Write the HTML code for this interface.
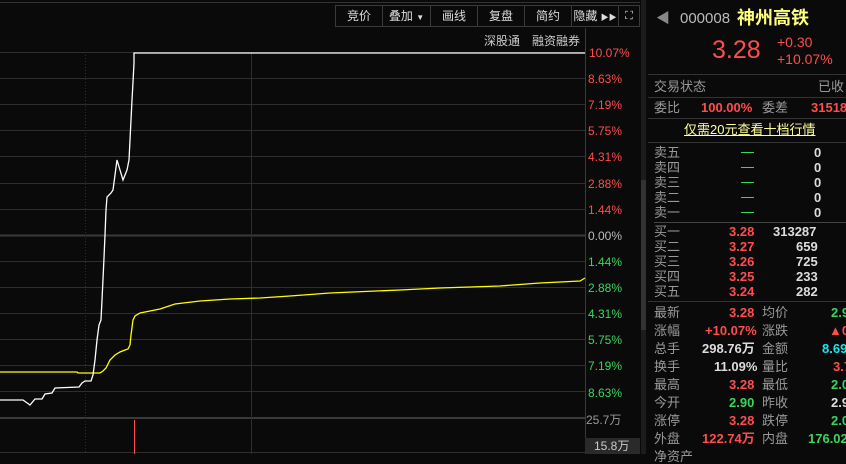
<!DOCTYPE html>
<html><head><meta charset="utf-8"><style>
*{margin:0;padding:0;box-sizing:border-box}
body{width:846px;height:454px;background:#0a0a0a;overflow:hidden;position:relative;font-family:"Liberation Sans","Noto Sans CJK SC",sans-serif;font-size:12px;color:#bbb}
.a{position:absolute;white-space:nowrap;line-height:14px}
.r{color:#ff4c4c}.g{color:#3ad65a}.w{color:#ddd}.c{color:#18e5f0}
.btn{position:absolute;top:5px;height:22px;border:1px solid #3a3a3a;color:#ddd;text-align:center;line-height:20px;font-size:12px}
.lbl{color:#999}
.rp .a{font-size:13px;line-height:15px}
.rp .r,.rp .g,.rp .w,.rp .c{font-weight:bold}
</style></head><body>
<div style="position:absolute;left:0;top:2px;width:640px;height:1px;background:#333"></div>
<div class="btn" style="left:335px;width:48px">竞价</div>
<div class="btn" style="left:382px;width:49px">叠加 <span style="font-size:8px">▼</span></div>
<div class="btn" style="left:430px;width:48px">画线</div>
<div class="btn" style="left:477px;width:48px">复盘</div>
<div class="btn" style="left:524px;width:48px">简约</div>
<div class="btn" style="left:571px;width:48px">隐藏 <span style="font-size:8px">▶▶</span></div>
<div class="btn" style="left:618px;width:22px;font-size:11px">⛶</div>
<div class="a w" style="left:484px;top:34px;color:#ccc">深股通</div>
<div class="a w" style="left:532px;top:34px;color:#ccc">融资融券</div>
<svg style="position:absolute;left:0;top:0" width="646" height="454">
<g stroke="#2e2e2e" stroke-width="1">
<line x1="0" y1="52.5" x2="585" y2="52.5"/><line x1="0" y1="78.5" x2="585" y2="78.5"/><line x1="0" y1="104.5" x2="585" y2="104.5"/><line x1="0" y1="130.5" x2="585" y2="130.5"/><line x1="0" y1="156.5" x2="585" y2="156.5"/><line x1="0" y1="183.5" x2="585" y2="183.5"/><line x1="0" y1="209.5" x2="585" y2="209.5"/>
<line x1="0" y1="235.5" x2="585" y2="235.5" stroke="#3a3a3a" stroke-width="2"/>
<line x1="0" y1="261.5" x2="585" y2="261.5"/><line x1="0" y1="287.5" x2="585" y2="287.5"/><line x1="0" y1="313.5" x2="585" y2="313.5"/><line x1="0" y1="339.5" x2="585" y2="339.5"/><line x1="0" y1="365.5" x2="585" y2="365.5"/><line x1="0" y1="391.5" x2="585" y2="391.5"/>
<line x1="0" y1="418" x2="585" y2="418" stroke="#3a3a3a" stroke-width="2"/>
<line x1="0" y1="452.5" x2="585" y2="452.5"/>
<line x1="251.5" y1="52" x2="251.5" y2="454"/>
<line x1="585.5" y1="28" x2="585.5" y2="454" stroke="#3a3a3a"/>
<line x1="85.5" y1="52" x2="85.5" y2="454" stroke-dasharray="1,2"/>
</g>
<line x1="134.5" y1="420" x2="134.5" y2="454" stroke="#ff4c4c"/>
<polyline fill="none" stroke="#ffff00" stroke-width="1.3" points="0,372 77,372 78,373 100,373 103,371 106,368 110,360 115,355 120,352 125,350 128,349 130,345 131,335 133,320 135,316 140,313 150,311 160,309 175,304 200,301 230,299 260,298 290,296 330,293 400,290 440,288 500,286 540,283 580,281 585,278"/>
<polyline fill="none" stroke="#fff" stroke-width="1.3" points="0,400 23,400 30,405 35,399 42,399 45,394 52,393 55,388 79,387 82,383 85,381 91,381 93,375 95,360 97,340 99,325 101,320 102,300 104,258 105,235 106,210 107,197 111,193 113,190 115,175 117,160 120,170 123,180 127,170 129,160 130,140 131,120 132,100 133,82 134,63 134,53 585,53"/>
<rect x="641" y="0" width="6" height="454" fill="#1c1c1c"/>
<rect x="641" y="180" width="6" height="150" fill="#333"/>
</svg>
<div class="a r" style="left:589px;top:46px">10.07%</div>
<div class="a r" style="left:588px;top:72px">8.63%</div>
<div class="a r" style="left:588px;top:98px">7.19%</div>
<div class="a r" style="left:588px;top:124px">5.75%</div>
<div class="a r" style="left:588px;top:150px">4.31%</div>
<div class="a r" style="left:588px;top:177px">2.88%</div>
<div class="a r" style="left:588px;top:203px">1.44%</div>
<div class="a" style="left:588px;top:229px;color:#bbb">0.00%</div>
<div class="a g" style="left:588px;top:255px">1.44%</div>
<div class="a g" style="left:588px;top:281px">2.88%</div>
<div class="a g" style="left:588px;top:307px">4.31%</div>
<div class="a g" style="left:588px;top:333px">5.75%</div>
<div class="a g" style="left:588px;top:359px">7.19%</div>
<div class="a g" style="left:588px;top:386px">8.63%</div>
<div class="a" style="left:586px;top:413px;color:#999">25.7万</div>
<div style="position:absolute;left:585px;top:438px;width:55px;height:16px;background:#2a2a2a"></div>
<div class="a" style="left:594px;top:439px;color:#ccc">15.8万</div>

<div class="rp" style="position:absolute;left:648px;top:0;width:198px;height:454px">
<div class="a" style="left:8px;top:11px;color:#888;font-size:14px">◀</div>
<div class="a" style="left:32px;top:11px;color:#bbb;font-size:15px;font-weight:normal">000008</div>
<div class="a" style="left:89px;top:7px;color:#ffff80;font-size:18px;font-weight:bold;line-height:22px">神州高铁</div>
<div class="a r" style="left:64px;top:37px;font-size:25px;line-height:27px;font-weight:normal">3.28</div>
<div class="a r" style="left:129px;top:35px;font-size:14px;font-weight:normal">+0.30</div>
<div class="a r" style="left:129px;top:52px;font-size:14px;font-weight:normal">+10.07%</div>
<div style="position:absolute;left:0;top:74px;width:198px;height:1px;background:#333"></div>
<div class="a lbl" style="left:6px;top:79px">交易状态</div>
<div class="a lbl" style="left:170px;top:79px">已收</div>
<div style="position:absolute;left:0;top:97px;width:198px;height:1px;background:#333"></div>
<div class="a lbl" style="left:6px;top:100px">委比</div>
<div class="a r" style="left:53px;top:100px">100.00%</div>
<div class="a lbl" style="left:114px;top:100px">委差</div>
<div class="a r" style="left:163px;top:100px">31518</div>
<div style="position:absolute;left:0;top:118px;width:198px;height:1px;background:#333"></div>
<div class="a" style="left:36px;top:122px;color:#ffff99;text-decoration:underline">仅需20元查看十档行情</div>
<div style="position:absolute;left:0;top:142px;width:198px;height:1px;background:#333"></div>
<div class="a lbl" style="left:6px;top:145px">卖五</div><div style="position:absolute;left:93px;top:152px;width:13px;height:1px;background:#3ad65a"></div><div class="a w" style="left:166px;top:145px">0</div>
<div class="a lbl" style="left:6px;top:160px">卖四</div><div style="position:absolute;left:93px;top:167px;width:13px;height:1px;background:#3ad65a"></div><div class="a w" style="left:166px;top:160px">0</div>
<div class="a lbl" style="left:6px;top:175px">卖三</div><div style="position:absolute;left:93px;top:182px;width:13px;height:1px;background:#3ad65a"></div><div class="a w" style="left:166px;top:175px">0</div>
<div class="a lbl" style="left:6px;top:190px">卖二</div><div style="position:absolute;left:93px;top:197px;width:13px;height:1px;background:#3ad65a"></div><div class="a w" style="left:166px;top:190px">0</div>
<div class="a lbl" style="left:6px;top:205px">卖一</div><div style="position:absolute;left:93px;top:212px;width:13px;height:1px;background:#3ad65a"></div><div class="a w" style="left:166px;top:205px">0</div>
<div style="position:absolute;left:6px;top:222px;width:192px;height:1px;background:#444"></div>
<div class="a lbl" style="left:6px;top:224px">买一</div><div class="a r" style="left:81px;top:224px">3.28</div><div class="a w" style="left:125px;top:224px">313287</div>
<div class="a lbl" style="left:6px;top:239px">买二</div><div class="a r" style="left:81px;top:239px">3.27</div><div class="a w" style="left:148px;top:239px">659</div>
<div class="a lbl" style="left:6px;top:254px">买三</div><div class="a r" style="left:81px;top:254px">3.26</div><div class="a w" style="left:148px;top:254px">725</div>
<div class="a lbl" style="left:6px;top:269px">买四</div><div class="a r" style="left:81px;top:269px">3.25</div><div class="a w" style="left:148px;top:269px">233</div>
<div class="a lbl" style="left:6px;top:284px">买五</div><div class="a r" style="left:81px;top:284px">3.24</div><div class="a w" style="left:148px;top:284px">282</div>
<div style="position:absolute;left:0;top:301px;width:198px;height:1px;background:#333"></div>
<div class="a lbl" style="left:6px;top:305px">最新</div><div class="a r" style="left:81px;top:305px">3.28</div><div class="a lbl" style="left:114px;top:305px">均价</div><div class="a g" style="left:183px;top:305px">2.9</div>
<div class="a lbl" style="left:6px;top:323px">涨幅</div><div class="a r" style="left:57px;top:323px">+10.07%</div><div class="a lbl" style="left:114px;top:323px">涨跌</div><div class="a r" style="left:181px;top:323px">▲0.3</div>
<div class="a lbl" style="left:6px;top:341px">总手</div><div class="a w" style="left:54px;top:341px">298.76万</div><div class="a lbl" style="left:114px;top:341px">金额</div><div class="a c" style="left:174px;top:341px">8.69</div>
<div class="a lbl" style="left:6px;top:359px">换手</div><div class="a w" style="left:66px;top:359px">11.09%</div><div class="a lbl" style="left:114px;top:359px">量比</div><div class="a r" style="left:185px;top:359px">3.7</div>
<div class="a lbl" style="left:6px;top:377px">最高</div><div class="a r" style="left:81px;top:377px">3.28</div><div class="a lbl" style="left:114px;top:377px">最低</div><div class="a g" style="left:183px;top:377px">2.0</div>
<div class="a lbl" style="left:6px;top:395px">今开</div><div class="a g" style="left:81px;top:395px">2.90</div><div class="a lbl" style="left:114px;top:395px">昨收</div><div class="a w" style="left:183px;top:395px">2.9</div>
<div class="a lbl" style="left:6px;top:413px">涨停</div><div class="a r" style="left:81px;top:413px">3.28</div><div class="a lbl" style="left:114px;top:413px">跌停</div><div class="a g" style="left:183px;top:413px">2.0</div>
<div class="a lbl" style="left:6px;top:431px">外盘</div><div class="a r" style="left:54px;top:431px">122.74万</div><div class="a lbl" style="left:114px;top:431px">内盘</div><div class="a g" style="left:160px;top:431px">176.02</div>
<div class="a lbl" style="left:6px;top:449px">净资产</div>
</div>
</body></html>
